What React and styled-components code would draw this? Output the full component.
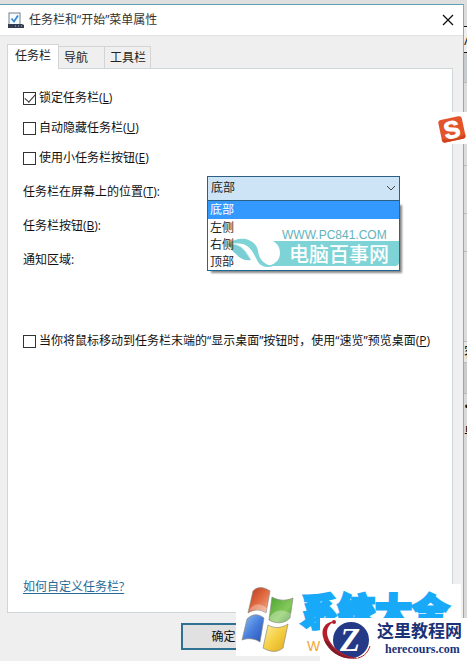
import React, { useState } from 'react';
import styled, { createGlobalStyle } from 'styled-components';

const GlobalStyle = createGlobalStyle`
  * { box-sizing: border-box; }
  body {
    margin: 0;
    overflow: hidden;
    font-family: "Open Sans", "Noto Sans CJK SC", sans-serif;
    font-size: 12px;
    line-height: 16px;
    color: #111;
  }
  button, select, input { font: inherit; margin: 0; }
`;

const Desktop = styled.div`
  position: relative;
  display: flex;
  min-height: 100vh;
  padding-top: 4px;
  background: #dfdfdf;
  overflow: hidden;
`;

const Dialog = styled.section`
  flex: 1;
  min-width: 0;
  display: flex;
  flex-direction: column;
  background: #efefef;
  border-top: 1px solid #5d9fae;
  border-right: 1px solid #74b6c1;
`;

const TitleBar = styled.header`
  display: flex;
  align-items: center;
  gap: 5px;
  height: 31px;
  padding: 0 9px 0 8px;
  background: #fff;
  border-bottom: 1px solid #e2e2e2;
`;

const Title = styled.h1`
  flex: 1;
  margin: 0;
  font-size: 12px;
  font-weight: 400;
  color: #333;
`;

const CloseButton = styled.button`
  display: flex;
  padding: 0;
  border: 0;
  background: none;
`;

const Tabs = styled.div`
  display: flex;
  align-items: flex-end;
  height: 32px;
  padding-left: 7px;
`;

const Tab = styled.button`
  position: relative;
  height: ${p => (p.$active ? 25 : 22)}px;
  padding: 0 ${p => (p.$wide ? 4 : 7)}px ${p => (p.$active ? 2 : 0)}px ${p => (p.$wide ? 5 : 7)}px;
  border: 1px solid #d4d4d4;
  border-left-width: ${p => (p.$active ? 1 : 0)}px;
  border-bottom: 0;
  background: ${p => (p.$active ? '#fff' : '#efefef')};
  color: #222;
  z-index: ${p => (p.$active ? 1 : 0)};
  margin-bottom: ${p => (p.$active ? -1 : 0)}px;
`;

const TabPage = styled.main`
  flex: 1;
  display: flex;
  flex-direction: column;
  align-items: stretch;
  margin: 0 10px 0 7px;
  padding: 14px 15px 17px;
  background: #fff;
  border: 1px solid #cfd6da;
`;

const CheckRow = styled.label`
  display: flex;
  align-items: center;
  gap: 3px;
  height: 30px;
  white-space: nowrap;
`;

const CheckBox = styled.input`
  appearance: none;
  flex: none;
  width: 13px;
  height: 13px;
  border: 1px solid #333;
  background: #fff;
  display: grid;
  place-items: center;

  &:checked::after {
    content: '';
    width: 9px;
    height: 5px;
    margin-top: -3px;
    border: solid #333;
    border-width: 0 0 1px 1px;
    transform: rotate(-48deg);
  }
`;

const Fields = styled.div`
  padding: 2px 0 49px;
`;

const Field = styled.div`
  display: grid;
  grid-template-columns: 184px 193px;
  align-items: center;
  height: 34px;
`;

const Combo = styled.div`
  position: relative;
  display: flex;
  align-items: center;
  margin-bottom: 8px;
`;

const Select = styled.select`
  appearance: none;
  width: 100%;
  height: 25px;
  padding: 0 3px;
  border: 1px solid #2b6084;
  border-radius: 0;
  background: #cde4f7;
  color: #222;
`;

const Arrow = styled.svg`
  position: absolute;
  right: 4px;
  pointer-events: none;
`;

const Options = styled.ul`
  position: absolute;
  top: 25px;
  left: 0;
  right: 0;
  z-index: 2;
  margin: 0;
  padding: 0;
  list-style: none;
  background: #fff;
  border: 1px solid #1c6a94;
  border-top: 0;
  box-shadow: 3px 3px 2px -1px #888;
`;

const Option = styled.li`
  height: ${p => (p.$selected ? 18 : 17)}px;
  line-height: 17px;
  padding-left: 2px;
  background: ${p => (p.$selected ? '#3399ff' : 'none')};
  color: ${p => (p.$selected ? '#fff' : '#222')};
`;

const ComboMark = styled.div`
  position: absolute;
  left: 14px;
  right: 0;
  bottom: 0;
  z-index: -1;
  display: flex;
  align-items: flex-end;
`;

const ComboMarkText = styled.div`
  flex: 1;
  min-width: 0;
  white-space: nowrap;
`;

const ComboMarkUrl = styled.div`
  font-family: "Liberation Sans", sans-serif;
  font-size: 12px;
  line-height: 12px;
  color: #63b3bb;
`;

const ComboMarkName = styled.div`
  height: 25px;
  padding-left: 7px;
  margin-bottom: 4px;
  font-family: "Noto Sans CJK SC", sans-serif;
  font-size: 20px;
  font-weight: 500;
  line-height: 25px;
  color: #fff;
  background: #7dd3d6;
  border-radius: 0 0 4px 0;
`;

const HelpLink = styled.a`
  align-self: flex-start;
  margin-top: auto;
  color: #286a94;
  text-decoration: underline;
  text-underline-offset: 2px;
`;

const Footer = styled.footer`
  display: flex;
  justify-content: flex-end;
  gap: 8px;
  padding: 10px 11px 11px;
`;

const PushButton = styled.button`
  width: 85px;
  height: 27px;
  padding: 0;
  color: #111;
  background: #e1e1e1;
  border: ${p => (p.$primary ? '2px solid #2e7193' : '1px solid #adadad')};
`;

const Behind = styled.aside`
  flex: none;
  width: 3px;
  overflow: hidden;
`;

const BehindRow = styled.div`
  height: ${p => p.$h}px;
  display: flex;
  align-items: center;
  background: ${p => p.$bg || '#dcdcdc'};
  border-bottom: 1px solid ${p => p.$line || '#bbb'};
  font-size: 14px;
  overflow: hidden;
  white-space: nowrap;
`;

const InputMark = styled.div`
  position: absolute;
  top: 112px;
  right: 0;
  width: 35px;
  height: 32px;
  background: #fff;
`;

const SiteMark = styled.div`
  position: absolute;
  right: 6px;
  bottom: 5px;
  display: flex;
  width: 225px;
  height: 72px;
  padding-left: 11px;
  background: #fff;
`;

const SiteMarkText = styled.div`
  font-family: "Noto Sans CJK SC", sans-serif;
  font-size: 37px;
  font-weight: 900;
  line-height: 52px;
  color: #18a9f8;
  -webkit-text-stroke: 3px #18a9f8;
  white-space: nowrap;
`;

const SiteMarkUrl = styled.div`
  padding-left: 6px;
  font-family: "Liberation Sans", sans-serif;
  font-size: 14px;
  font-weight: 400;
  line-height: 20px;
  color: #f0a536;
  -webkit-text-stroke: 0;
`;

const CourseMark = styled.div`
  position: absolute;
  right: 0;
  bottom: 0;
  display: flex;
  width: 147px;
  height: 43px;
  background: #fff;
`;

const CourseText = styled.div`
  flex: 1;
  color: #1b3278;
  white-space: nowrap;
`;

const CourseName = styled.div`
  padding-left: 5px;
  font-family: "Noto Sans CJK SC", sans-serif;
  font-size: 17px;
  font-weight: 700;
  line-height: 24px;
`;

const CourseUrl = styled.div`
  padding-left: 13px;
  font-family: "Liberation Serif", serif;
  font-size: 12px;
  font-weight: 700;
  line-height: 14px;
`;

const TitleIcon = () => (
  <svg width="16" height="17" viewBox="0 0 16 17" aria-hidden="true">
    <rect x="1" y="1" width="11" height="12" fill="#f6fbff" stroke="#71808c" />
    <path d="M3.5 6.5l2.5 3 4-6" fill="none" stroke="#3589cf" strokeWidth="1.7" />
    <path d="M0 12h14l2 1v3H0z" fill="#333c51" />
    <path d="M7 14h1M10 14h1M13 14h1" stroke="#a9bad0" />
  </svg>
);

const SLogo = () => (
  <svg width="35" height="32" viewBox="0 0 35 32" aria-hidden="true">
    <g transform="rotate(-12 19.5 18)">
      <rect x="8" y="6" width="24" height="23" rx="3" fill="#e3542b" />
      <path d="M8 25v1q0 3 3 3h18q3 0 3-3V25q-11 4-24 0z" fill="#cf431e" />
      <text x="20" y="26" textAnchor="middle" fontFamily="Liberation Sans" fontSize="24" fontWeight="700" fill="#fff" stroke="#fff">S</text>
    </g>
  </svg>
);

const Bird = () => (
  <svg width="60" height="35" viewBox="0 0 60 35" aria-hidden="true">
    <path d="M6 9C12 4 18 3 24 4c7 2 11 6 12 12 1 8 6 14 15 15-5 2-12 1-15-4-4-7-6-15-15-18-5-1-10-1-15 0z" fill="#7dd3d6" />
    <path d="M6 9c7-1 13 2 17 7l6 9c-5 1-11-1-14-5C11 17 8 13 6 9z" fill="#79cdd3" />
    <path d="M11 9c8 1 12 6 17 14" fill="none" stroke="#c9eeee" />
    <path d="M51 6h9v25H44c9-1 14-6 14-13 0-5-2-9-7-12z" fill="#7dd3d6" />
  </svg>
);

const Flag = () => (
  <svg width="54" height="68" viewBox="0 0 54 68" overflow="visible" aria-hidden="true">
    <defs>
      <linearGradient id="red" x2="1" y2="1"><stop stopColor="#b8341f" /><stop offset=".5" stopColor="#e16a40" /><stop offset="1" stopColor="#f5b293" /></linearGradient>
      <linearGradient id="green" x2="1" y2="1"><stop stopColor="#48a332" /><stop offset=".6" stopColor="#86c95b" /><stop offset="1" stopColor="#389431" /></linearGradient>
      <linearGradient id="blue" x2="1" y2="1"><stop stopColor="#8fc0f0" /><stop offset=".5" stopColor="#4a80dd" /><stop offset="1" stopColor="#2450b7" /></linearGradient>
      <linearGradient id="gold" x2="1" y2="1"><stop stopColor="#fff0a0" /><stop offset=".5" stopColor="#f4cf42" /><stop offset="1" stopColor="#e5a91f" /></linearGradient>
    </defs>
    <g stroke="#8d8a82" strokeWidth=".7">
      <path d="M6 7C11 2 17 3 23 7l-4 22C14 25 7 25 1 29z" fill="url(#red)" />
      <path d="M25 13c7 4 14 4 21 1l-3 20c-6 6-14 6-21 2z" fill="url(#green)" />
      <path d="M0 35c6-6 12-5 17-1l-4 24C7 54 0 54-5 56z" fill="url(#blue)" />
      <path d="M21 41c7 4 14 3 20-1l-5 24c-6 5-13 4-20 0z" fill="url(#gold)" />
    </g>
    <path d="M2 27c4-9 12-8 18-3l-1 5c-6-4-12-4-18-2zM23 33c5-8 14-8 21-3l-1 4c-6 5-13 6-20 2z" fill="#fff" opacity=".3" />
  </svg>
);

const Globe = () => (
  <svg width="52" height="43" viewBox="0 0 52 43" aria-hidden="true">
    <circle cx="31" cy="22" r="18" fill="#253a86" />
    <text x="30" y="33" textAnchor="middle" fontFamily="Liberation Serif" fontSize="33" fontWeight="700" fontStyle="italic" fill="#fff">Z</text>
    <path d="M15 3C4 4 0 12 4 22c5 12 19 21 34 18-12-1-24-8-29-18C5 14 7 7 15 3z" fill="#b51e2b" />
    <path d="M4 22c5 12 18 21 35 18-13 1-25-6-30-16z" fill="#801b29" />
    <circle cx="14" cy="4" r="2" fill="#b51e2b" />
    <path d="M38 40c7-2 10-6 12-12" fill="none" stroke="#b51e2b" />
  </svg>
);

const places = ['底部', '左侧', '右侧', '顶部'];

const App = () => {
  const [place, setPlace] = useState('底部');

  return (
    <>
      <GlobalStyle />
      <Desktop>
        <Dialog>
          <TitleBar>
            <TitleIcon />
            <Title>任务栏和“开始”菜单属性</Title>
            <CloseButton aria-label="关闭">
              <svg width="12" height="12" viewBox="0 0 12 12">
                <path d="M1 1l10 10M11 1L1 11" stroke="#111" strokeWidth="1.3" />
              </svg>
            </CloseButton>
          </TitleBar>

          <Tabs role="tablist">
            <Tab role="tab" aria-selected="true" $active>任务栏</Tab>
            <Tab role="tab" aria-selected="false" $wide>导航&emsp;</Tab>
            <Tab role="tab" aria-selected="false" $wide>工具栏</Tab>
          </Tabs>

          <TabPage>
            <CheckRow>
              <CheckBox type="checkbox" defaultChecked />
              <span>锁定任务栏(<u>L</u>)</span>
            </CheckRow>
            <CheckRow>
              <CheckBox type="checkbox" />
              <span>自动隐藏任务栏(<u>U</u>)</span>
            </CheckRow>
            <CheckRow>
              <CheckBox type="checkbox" />
              <span>使用小任务栏按钮(<u>E</u>)</span>
            </CheckRow>

            <Fields>
              <Field>
                <label htmlFor="place">任务栏在屏幕上的位置(<u>T</u>):</label>
                <Combo>
                  <Select id="place" value={place} onChange={e => setPlace(e.target.value)}>
                    {places.map(p => <option key={p}>{p}</option>)}
                  </Select>
                  <Arrow width="10" height="6" viewBox="0 0 10 6">
                    <path d="M1 1l4 4 4-4" fill="none" stroke="#444" />
                  </Arrow>
                  <Options role="listbox">
                    {places.map(p => (
                      <Option key={p} role="option" aria-selected={p === place} $selected={p === place} onClick={() => setPlace(p)}>
                        {p}
                      </Option>
                    ))}
                    <ComboMark>
                      <Bird />
                      <ComboMarkText>
                        <ComboMarkUrl>WWW.PC841.COM</ComboMarkUrl>
                        <ComboMarkName>电脑百事网</ComboMarkName>
                      </ComboMarkText>
                    </ComboMark>
                  </Options>
                </Combo>
              </Field>
              <Field>
                <span>任务栏按钮(<u>B</u>):</span>
              </Field>
              <Field>
                <span>通知区域:</span>
              </Field>
            </Fields>

            <CheckRow>
              <CheckBox type="checkbox" />
              <span>当你将鼠标移动到任务栏末端的“显示桌面”按钮时，使用“速览”预览桌面(<u>P</u>)</span>
            </CheckRow>

            <HelpLink href="#help">如何自定义任务栏?</HelpLink>
          </TabPage>

          <Footer>
            <PushButton $primary>确定</PushButton>
            <PushButton>取消</PushButton>
            <PushButton>应用</PushButton>
          </Footer>
        </Dialog>

        <Behind aria-hidden="true">
          <BehindRow $h={23} $line="#111" />
          <BehindRow $h={26} $bg="#eee" $line="#111">/</BehindRow>
          <BehindRow $h={30} $bg="#c9cccf" />
          <BehindRow $h={33} />
          <BehindRow $h={50} />
          <BehindRow $h={48} />
          <BehindRow $h={38} />
          <BehindRow $h={90} />
          <BehindRow $h={21} $bg="#e6e6e6">容</BehindRow>
          <BehindRow $h={31} $bg="#ccc" />
          <BehindRow $h={26} $bg="#d9d9d9" $line="#d9d9d9">•</BehindRow>
          <BehindRow $h={20} $bg="#d9d9d9" $line="#d9d9d9">单</BehindRow>
          <BehindRow $h={220} $bg="#d9d9d9" $line="#d9d9d9" />
        </Behind>

        <InputMark><SLogo /></InputMark>
        <SiteMark>
          <Flag />
          <SiteMarkText>
            系统大全
            <SiteMarkUrl>W</SiteMarkUrl>
          </SiteMarkText>
        </SiteMark>
        <CourseMark>
          <Globe />
          <CourseText>
            <CourseName>这里教程网</CourseName>
            <CourseUrl>herecours.com</CourseUrl>
          </CourseText>
        </CourseMark>
      </Desktop>
    </>
  );
};

export default App;
